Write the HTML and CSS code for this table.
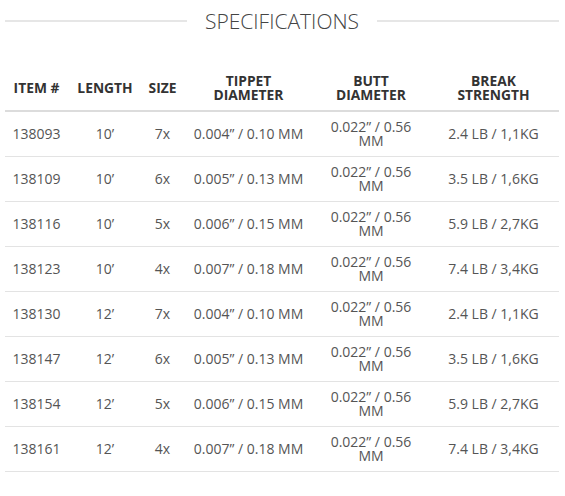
FILE: index.html
```html
<!DOCTYPE html>
<html>
<head>
<meta charset="utf-8">
<link rel="stylesheet" href="styles.css">
</head>
<body>
<div class="specs">
  <div class="title-row">
    <span class="rule"></span>
    <h2 class="title">SPECIFICATIONS</h2>
    <span class="rule"></span>
  </div>
  <div class="table">
    <div class="row head">
      <div class="cell">ITEM #</div>
      <div class="cell">LENGTH</div>
      <div class="cell">SIZE</div>
      <div class="cell">TIPPET<br>DIAMETER</div>
      <div class="cell">BUTT<br>DIAMETER</div>
      <div class="cell">BREAK<br>STRENGTH</div>
    </div>
    <div class="row"><div class="cell">138093</div><div class="cell">10’</div><div class="cell">7x</div><div class="cell">0.004” / 0.10 MM</div><div class="cell">0.022” / 0.56 MM</div><div class="cell">2.4 LB / 1,1KG</div></div>
    <div class="row"><div class="cell">138109</div><div class="cell">10’</div><div class="cell">6x</div><div class="cell">0.005” / 0.13 MM</div><div class="cell">0.022” / 0.56 MM</div><div class="cell">3.5 LB / 1,6KG</div></div>
    <div class="row"><div class="cell">138116</div><div class="cell">10’</div><div class="cell">5x</div><div class="cell">0.006” / 0.15 MM</div><div class="cell">0.022” / 0.56 MM</div><div class="cell">5.9 LB / 2,7KG</div></div>
    <div class="row"><div class="cell">138123</div><div class="cell">10’</div><div class="cell">4x</div><div class="cell">0.007” / 0.18 MM</div><div class="cell">0.022” / 0.56 MM</div><div class="cell">7.4 LB / 3,4KG</div></div>
    <div class="row"><div class="cell">138130</div><div class="cell">12’</div><div class="cell">7x</div><div class="cell">0.004” / 0.10 MM</div><div class="cell">0.022” / 0.56 MM</div><div class="cell">2.4 LB / 1,1KG</div></div>
    <div class="row"><div class="cell">138147</div><div class="cell">12’</div><div class="cell">6x</div><div class="cell">0.005” / 0.13 MM</div><div class="cell">0.022” / 0.56 MM</div><div class="cell">3.5 LB / 1,6KG</div></div>
    <div class="row"><div class="cell">138154</div><div class="cell">12’</div><div class="cell">5x</div><div class="cell">0.006” / 0.15 MM</div><div class="cell">0.022” / 0.56 MM</div><div class="cell">5.9 LB / 2,7KG</div></div>
    <div class="row"><div class="cell">138161</div><div class="cell">12’</div><div class="cell">4x</div><div class="cell">0.007” / 0.18 MM</div><div class="cell">0.022” / 0.56 MM</div><div class="cell">7.4 LB / 3,4KG</div></div>
  </div>
</div>
</body>
</html>
```
FILE: styles.css
```css
html, body {
  margin: 0;
  padding: 0;
  background: #fff;
}
body {
  font-family: "Open Sans", "Liberation Sans", sans-serif;
  color: #555;
}
.specs {
  width: 554px;
  margin-left: 5px;
  padding-top: 8px;
}
.title-row {
  display: flex;
  align-items: center;
  gap: 18px;
  height: 26px;
}
.rule {
  flex: 1;
  height: 2px;
  background: #e6e6e6;
}
.title {
  margin: 0;
  font-size: 21px;
  font-weight: 300;
  color: #444;
  line-height: 26px;
}
.table {
  margin-top: 34px;
}
.row {
  display: grid;
  grid-template-columns: 63px 74px 41px 131px 114px 131px;
  height: 45px;
  border-bottom: 1px solid #e3e3e3;
  box-sizing: border-box;
  font-size: 14px;
  line-height: 14px;
}
.row.head {
  height: 44px;
  border-bottom: 2px solid #dcdcdc;
  align-items: start;
  font-weight: 700;
  color: #333;
  font-size: 13.8px;
  line-height: 14px;
}
.cell {
  display: flex;
  align-items: center;
  justify-content: center;
  text-align: center;
  padding: 0 8px;
}
.head .cell {
  height: 40px;
}
```
